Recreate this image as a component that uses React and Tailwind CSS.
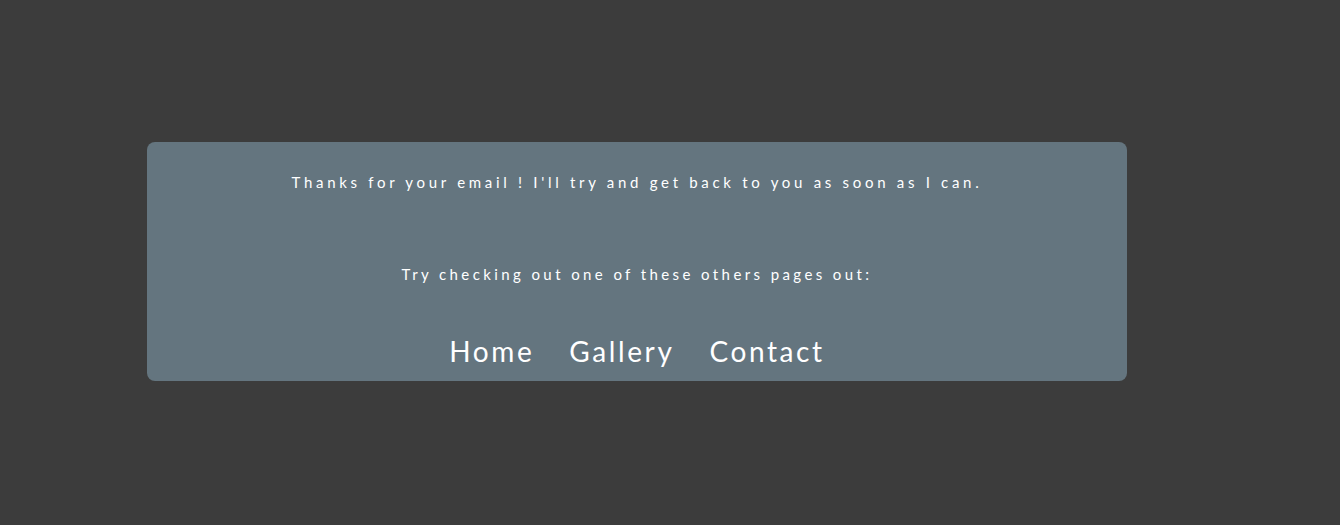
import React from 'react';

const links = ['Home', 'Gallery', 'Contact'];

const App = () => {
  return (
    <div
      className="min-h-screen w-full bg-[#3c3c3c] pt-[142px]"
      style={{ fontFamily: 'Lato, "Open Sans", sans-serif' }}
    >
      <div className="ml-[147px] w-[980px] h-[239px] rounded-lg bg-[#64757f] text-white flex flex-col items-center">
        <p className="mt-[31px] text-[15px] leading-[18px] tracking-[3.7px]">
          Thanks for your email ! I'll try and get back to you as soon as I can.
        </p>
        <p className="mt-[74px] text-[15px] leading-[18px] tracking-[3.4px]">
          Try checking out one of these others pages out:
        </p>
        <nav className="mt-[51px] flex gap-[35px] text-[28px] leading-[34px] tracking-[2.6px]">
          {links.map((link) => (
            <a key={link} href="#" className="text-white">
              {link}
            </a>
          ))}
        </nav>
      </div>
    </div>
  );
};

export default App;
